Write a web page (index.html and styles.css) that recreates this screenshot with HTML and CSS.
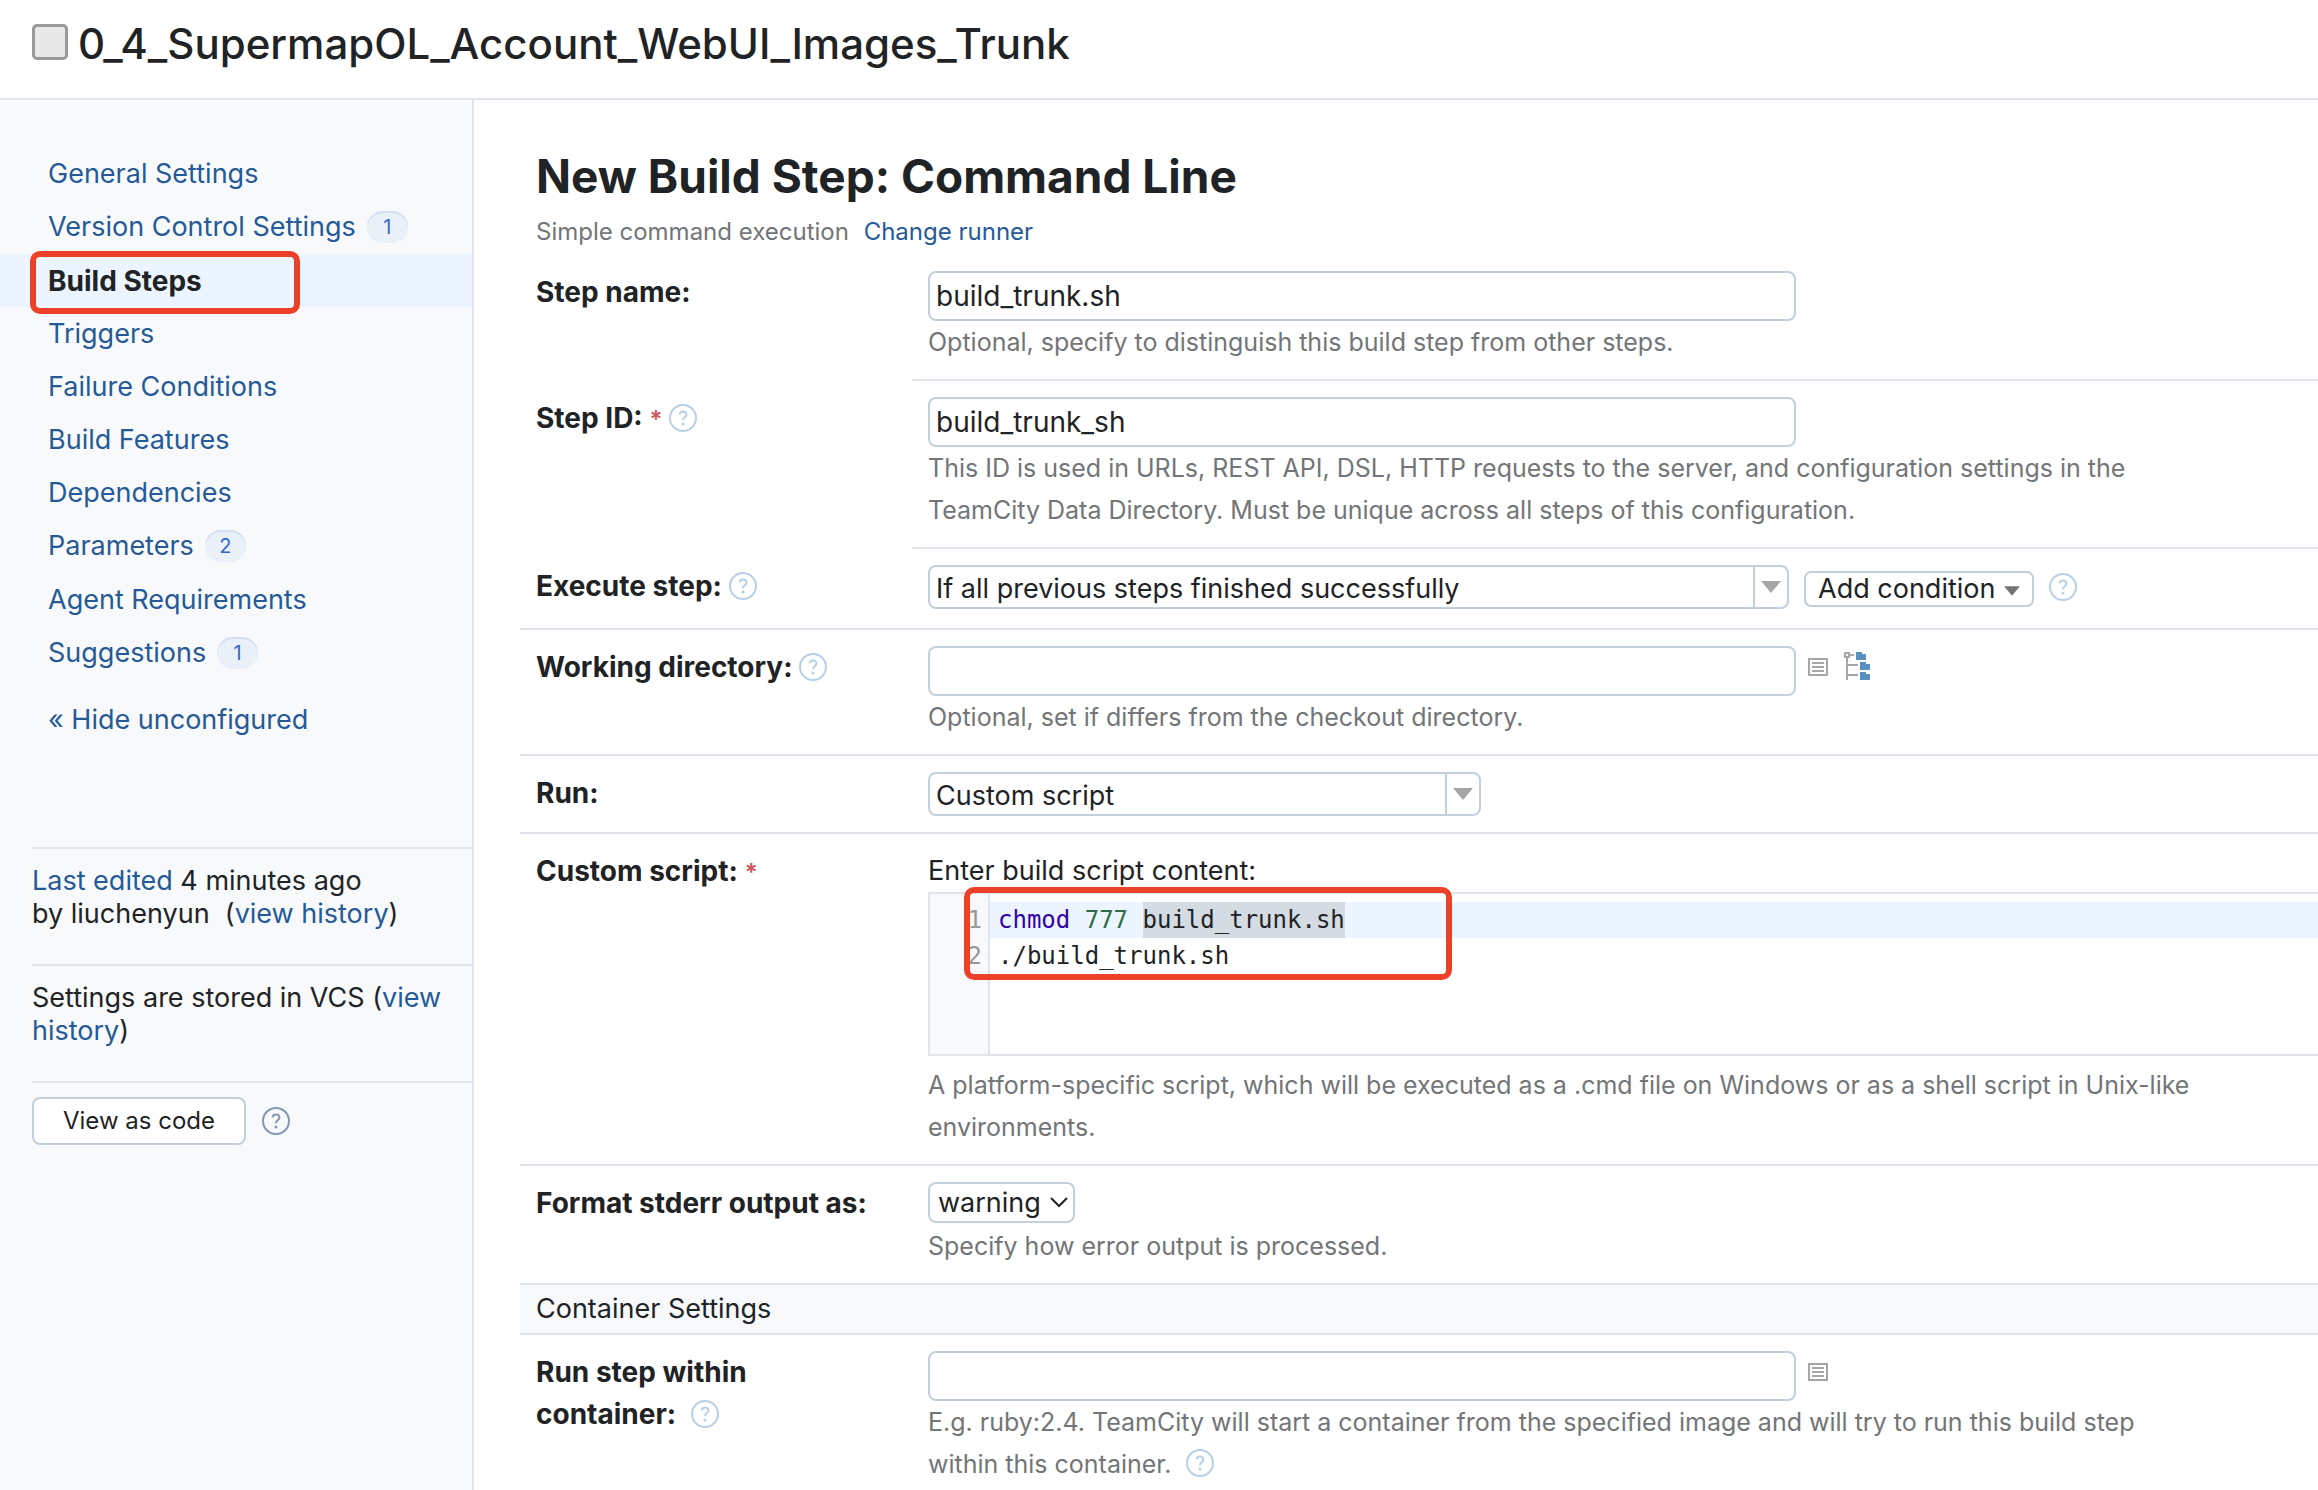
FILE: index.html
```html
<!DOCTYPE html>
<html lang="en">
<head>
<meta charset="utf-8">
<meta name="viewport" content="width=device-width, initial-scale=1">
<title>0_4_SupermapOL_Account_WebUI_Images_Trunk</title>
<link rel="stylesheet" href="styles.css">
</head>
<body>
<svg class="sprite" aria-hidden="true">
  <symbol id="help" viewBox="0 0 28 28">
    <circle cx="14" cy="14" r="13" fill="none" stroke="currentColor" stroke-width="2"/>
    <path d="M10.6 10.4C10.8 8.4 12.2 7.4 14 7.4c2 0 3.4 1.200 3.400 3 0 1.400-.8 2.200-1.700 2.900-1.100.8-1.700 1.400-1.700 3" fill="none" stroke="currentColor" stroke-width="2"/>
    <circle cx="14" cy="20" r="1.500" fill="currentColor"/>
  </symbol>
  <symbol id="list" viewBox="0 0 20 18">
    <path d="M1 1h18v16H1zM4 5h12M4 9h12M4 13h12" fill="none" stroke="currentColor" stroke-width="2"/>
  </symbol>
  <symbol id="tree" viewBox="0 0 26 28">
    <path d="M1 1h4v4H1zM6 3h4M3 6v22M4 13h10M4 23h10" fill="none" stroke="#a6a6a6" stroke-width="2"/>
    <path d="M12 0h6v2h4v6H12zM16 10h6v2h4v6H16zM16 20h6v2h4v6H16z" fill="#5a90c0"/>
  </symbol>
  <symbol id="triangle" viewBox="0 0 20 12">
    <path d="M0 0h20L10 12z" fill="currentColor"/>
  </symbol>
  <symbol id="chevron" viewBox="0 0 18 12">
    <path d="M1 2l8 8 8-8" fill="none" stroke="currentColor" stroke-width="2"/>
  </symbol>
</svg>

<header class="page-header">
  <input class="status-box" type="checkbox" aria-label="Select configuration">
  <span class="page-title">0_4_SupermapOL_Account_WebUI_Images_Trunk</span>
</header>

<div class="layout">
  <aside class="sidebar">
    <nav class="nav">
      <a class="nav-item" href="#general">General Settings</a>
      <a class="nav-item has-badge" href="#vcs">Version Control Settings <span class="badge">1</span></a>
      <a class="nav-item active" href="#steps">Build Steps</a>
      <a class="nav-item" href="#triggers">Triggers</a>
      <a class="nav-item" href="#failure">Failure Conditions</a>
      <a class="nav-item" href="#features">Build Features</a>
      <a class="nav-item" href="#dependencies">Dependencies</a>
      <a class="nav-item has-badge" href="#parameters">Parameters <span class="badge">2</span></a>
      <a class="nav-item" href="#agents">Agent Requirements</a>
      <a class="nav-item" href="#suggestions">Suggestions <span class="badge">1</span></a>
      <a class="nav-item nav-toggle" href="#hide">« Hide unconfigured</a>
    </nav>
    <div class="side-note"><a href="#edited">Last edited</a> 4 minutes ago<br>by liuchenyun &nbsp;(<a href="#history">view history</a>)</div>
    <div class="side-note">Settings are stored in VCS (<a href="#vcs-history">view history</a>)</div>
    <div class="side-actions">
      <button class="button" type="button">View as code</button>
      <svg class="help help-dark" role="img" aria-label="Help"><use href="#help"/></svg>
    </div>
  </aside>

  <main class="main">
    <h1 class="heading">New Build Step: Command Line</h1>
    <p class="runner">Simple command execution <a href="#runner">Change runner</a></p>

    <form class="form">
      <div class="row row-short">
        <label class="label" for="name">Step name:</label>
        <div class="field">
          <input class="text-input" id="name" type="text" value="build_trunk.sh">
          <p class="hint">Optional, specify to distinguish this build step from other steps.</p>
        </div>
      </div>
      <div class="row row-short">
        <label class="label" for="step-id">Step ID: <span class="required">*</span> <svg class="help"><use href="#help"/></svg></label>
        <div class="field">
          <input class="text-input" id="step-id" type="text" value="build_trunk_sh">
          <p class="hint">This ID is used in URLs, REST API, DSL, HTTP requests to the server, and configuration settings in the TeamCity Data Directory. Must be unique across all steps of this configuration.</p>
        </div>
      </div>
      <div class="row">
        <label class="label" for="execute">Execute step: <svg class="help"><use href="#help"/></svg></label>
        <div class="field field-line execute-line">
          <div class="combo combo-wide">
            <select class="combo-select" id="execute"><option>If all previous steps finished successfully</option></select>
            <span class="combo-arrow"><svg class="triangle"><use href="#triangle"/></svg></span>
          </div>
          <button class="menu-button" type="button">Add condition <svg class="menu-caret"><use href="#triangle"/></svg></button>
          <svg class="help" role="img" aria-label="Help"><use href="#help"/></svg>
        </div>
      </div>
      <div class="row">
        <label class="label" for="workdir">Working directory: <svg class="help"><use href="#help"/></svg></label>
        <div class="field">
          <div class="input-line">
            <input class="text-input" id="workdir" type="text">
            <svg class="list-icon" role="img" aria-label="Insert parameter"><use href="#list"/></svg>
            <svg class="tree-icon" role="img" aria-label="Browse"><use href="#tree"/></svg>
          </div>
          <p class="hint">Optional, set if differs from the checkout directory.</p>
        </div>
      </div>
      <div class="row">
        <label class="label" for="run">Run:</label>
        <div class="field">
          <div class="combo combo-narrow">
            <select class="combo-select" id="run"><option>Custom script</option></select>
            <span class="combo-arrow"><svg class="triangle"><use href="#triangle"/></svg></span>
          </div>
        </div>
      </div>
      <div class="row">
        <span class="label" id="script-label">Custom script: <span class="required">*</span></span>
        <div class="field">
          <p class="field-caption">Enter build script content:</p>
          <div class="editor" role="textbox" aria-multiline="true" aria-labelledby="script-label">
            <div class="code-line current"><span class="line-no">1</span><code class="code"><span class="command">chmod</span> <span class="number">777</span> <span class="selected">build_trunk.sh</span></code></div>
            <div class="code-line"><span class="line-no">2</span><code class="code">./build_trunk.sh</code></div>
          </div>
          <p class="hint">A platform-specific script, which will be executed as a .cmd file on Windows or as a shell script in Unix-like environments.</p>
        </div>
      </div>
      <div class="row">
        <label class="label" for="stderr">Format stderr output as:</label>
        <div class="field">
          <div class="native">
            <select class="native-select" id="stderr"><option>warning</option></select>
            <svg class="chevron"><use href="#chevron"/></svg>
          </div>
          <p class="hint">Specify how error output is processed.</p>
        </div>
      </div>
      <h2 class="section">Container Settings</h2>
      <div class="row row-last">
        <label class="label" for="container">Run step within<br>container: <svg class="help help-spaced"><use href="#help"/></svg></label>
        <div class="field">
          <div class="input-line">
            <input class="text-input" id="container" type="text">
            <svg class="list-icon" role="img" aria-label="Insert parameter"><use href="#list"/></svg>
          </div>
          <p class="hint">E.g. ruby:2.4. TeamCity will start a container from the specified image and will try to run this build step within this container. <svg class="help help-spaced"><use href="#help"/></svg></p>
        </div>
      </div>
    </form>
  </main>
</div>
</body>
</html>
```
FILE: styles.css
```css
:root {
  --text: #1f2326;
  --muted: #737577;
  --link: #265a96;
  --line: #dfe5eb;
  --border: #c3d0dc;
  --panel: #f7f9fb;
  --highlight: #ebf4ff;
  --mark: #ed4028;
}

*,
*::after {
  box-sizing: border-box;
}

body {
  margin: 0;
  min-height: 100vh;
  display: flex;
  flex-direction: column;
  background: #fff;
  color: var(--text);
  font: 27px/42px Inter, "Liberation Sans", sans-serif;
}

a {
  color: var(--link);
  text-decoration: none;
}

input,
select,
button {
  margin: 0;
  font: inherit;
  color: inherit;
}

.sprite {
  position: absolute;
  width: 0;
  height: 0;
}

.page-header {
  display: flex;
  align-items: center;
  gap: 10px;
  height: 100px;
  padding: 0 32px 14px;
  border-bottom: 2px solid var(--line);
}

.status-box {
  appearance: none;
  flex: none;
  width: 36px;
  height: 36px;
  border: 3px solid #999;
  border-radius: 5px;
  background: #e8e8e8;
}

.page-title {
  padding-top: 4px;
  font-size: 42px;
  font-weight: 500;
  line-height: 54px;
}

.layout {
  flex: 1;
  display: flex;
}

.sidebar {
  flex: none;
  width: 474px;
  border-right: 2px solid var(--line);
  background: var(--panel);
}

.nav {
  display: flex;
  flex-direction: column;
  padding-top: 47px;
  margin-bottom: 101px;
}

.nav-item {
  position: relative;
  display: flex;
  align-items: center;
  gap: 11px;
  height: 53px;
  padding-left: 48px;
}

.has-badge {
  height: 54px;
}

.nav-toggle {
  margin-top: 14px;
}

.active {
  background: var(--highlight);
  color: var(--text);
  font-size: 28px;
  font-weight: 700;
}

.active::after {
  content: "";
  position: absolute;
  left: 30px;
  top: -3px;
  width: 270px;
  height: 63px;
  border: 6px solid var(--mark);
  border-radius: 10px;
}

.badge {
  width: 41px;
  height: 32px;
  border-radius: 16px;
  background: #e9f0f8;
  box-shadow: inset 0 2px #d5dff1;
  color: #3668c4;
  font-size: 20px;
  line-height: 32px;
  text-align: center;
}

.side-note {
  margin-left: 32px;
  padding: 15px 16px 34px 0;
  border-top: 2px solid var(--line);
  line-height: 33px;
}

.side-actions {
  display: flex;
  align-items: center;
  gap: 16px;
  margin-left: 32px;
  padding-top: 14px;
  border-top: 2px solid var(--line);
}

.button {
  height: 48px;
  padding: 0 29px;
  border: 2px solid var(--border);
  border-radius: 8px;
  background: #fff;
  font-size: 24px;
}

.help {
  display: inline-block;
  flex: none;
  width: 28px;
  height: 28px;
  vertical-align: -4px;
  color: #b8cfe6;
}

.help-dark {
  color: #8496b0;
}

.help-spaced {
  margin-left: 8px;
}

.main {
  flex: 1;
  min-width: 0;
  padding: 46px 0 0 46px;
}

.heading {
  margin: 0;
  padding-left: 16px;
  font-size: 46px;
  font-weight: 700;
  line-height: 60px;
}

.runner {
  margin: 4px 0 17px;
  padding-left: 16px;
  color: var(--muted);
  font-size: 24px;
  line-height: 44px;
}

.runner a {
  margin-left: 8px;
}

.row {
  display: grid;
  grid-template-columns: 392px 1fr;
  border-bottom: 2px solid var(--line);
}

.row-short {
  border-bottom: 0;
}

.row-short .field {
  border-bottom: 2px solid var(--line);
}

.row + .row .label,
.row + .row .field,
.section + .row .label,
.section + .row .field {
  padding-top: 16px;
}

.row-last {
  border-bottom: 0;
}

.label {
  padding-left: 16px;
  font-size: 28px;
  font-weight: 700;
}

.required {
  color: #d15c62;
  font-size: 24px;
}

.field {
  min-width: 0;
  padding-left: 16px;
  padding-bottom: 16px;
}

.row-last .field {
  padding-bottom: 0;
}

.field-line,
.input-line {
  display: flex;
  align-items: center;
}

.execute-line {
  gap: 15px;
  padding-bottom: 19px;
}

.input-line {
  gap: 12px;
}

.text-input {
  display: block;
  width: 868px;
  height: 50px;
  padding: 0 6px;
  border: 2px solid var(--border);
  border-radius: 8px;
  background: #fff;
  font-size: 28px;
}

.hint {
  max-width: 1280px;
  margin: 0;
  color: var(--muted);
  font-size: 25px;
}

.combo {
  position: relative;
}

.combo-wide {
  width: 861px;
}

.combo-narrow {
  width: 553px;
}

.combo-select {
  appearance: none;
  display: block;
  width: 100%;
  height: 44px;
  padding: 4px 40px 0 6px;
  border: 2px solid var(--border);
  border-radius: 8px;
  background: #fff;
  line-height: 36px;
}

.combo-arrow {
  position: absolute;
  top: 2px;
  right: 2px;
  bottom: 2px;
  display: flex;
  align-items: center;
  justify-content: center;
  width: 34px;
  border-left: 2px solid var(--border);
  pointer-events: none;
}

.triangle {
  width: 20px;
  height: 12px;
  color: #a6a6a6;
}

.menu-button {
  display: flex;
  align-items: center;
  gap: 9px;
  height: 36px;
  margin-top: 4px;
  padding: 0 12px;
  border: 2px solid var(--border);
  border-radius: 7px;
  background: #fff;
}

.menu-caret {
  width: 16px;
  height: 10px;
  margin-top: 4px;
  color: #737577;
}

.list-icon {
  width: 20px;
  height: 18px;
  margin-bottom: 8px;
  color: #a6a6a6;
}

.tree-icon {
  width: 26px;
  height: 28px;
  margin: 0 0 10px 4px;
}

.field-caption {
  margin: 0;
}

.editor {
  position: relative;
  height: 164px;
  margin-bottom: 8px;
  padding-top: 8px;
  border: 2px solid var(--line);
  border-right: 0;
  background: linear-gradient(to right, var(--panel) 58px, var(--line) 58px, var(--line) 60px, #fff 60px);
  font: 24px/36px "DejaVu Sans Mono", monospace;
}

.editor::after {
  content: "";
  position: absolute;
  left: 34px;
  top: -7px;
  width: 488px;
  height: 93px;
  border: 6px solid var(--mark);
  border-radius: 10px;
}

.code-line {
  display: grid;
  grid-template-columns: 60px 1fr;
}

.line-no {
  padding-right: 8px;
  color: #999;
  text-align: right;
}

.code {
  padding-left: 8px;
  font: inherit;
}

.current .code {
  background: var(--highlight);
}

.command {
  color: #30a;
}

.number {
  color: #2f6b4b;
}

.selected {
  display: inline-block;
  background: #d5dbe3;
}

.native {
  position: relative;
  width: 147px;
  height: 43px;
}

.native-select {
  appearance: none;
  display: block;
  width: 100%;
  height: 41px;
  padding: 0 0 0 8px;
  border: 2px solid var(--border);
  border-radius: 8px;
  background: #fff;
  line-height: 36px;
}

.chevron {
  position: absolute;
  right: 7px;
  top: 14px;
  width: 18px;
  height: 12px;
  pointer-events: none;
}

.section {
  margin: 0;
  padding-left: 16px;
  border-bottom: 2px solid var(--line);
  background: var(--panel);
  font-size: 27px;
  font-weight: 400;
  line-height: 48px;
}
```
